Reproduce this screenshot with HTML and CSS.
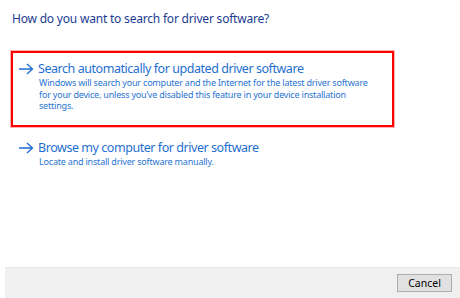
FILE: index.html
```html
<!DOCTYPE html>
<html>
<head>
<meta charset="utf-8">
<link rel="stylesheet" href="styles.css">
</head>
<body>
<div class="page">
  <div class="content">
    <h1 class="instruction">How do you want to search for driver software?</h1>
    <div class="option highlighted">
      <svg class="arrow" width="16" height="12" viewBox="0 0 16 12"><path d="M1 6 H14.5 M9 1 L14.5 6 L9 11" fill="none" stroke="#1f6fd0" stroke-width="1.3"/></svg>
      <div class="option-text">
        <div class="option-title">Search automatically for updated driver software</div>
        <div class="option-desc">Windows will search your computer and the Internet for the latest driver software for your device, unless you’ve disabled this feature in your device installation settings.</div>
      </div>
    </div>
    <div class="option">
      <svg class="arrow" width="16" height="12" viewBox="0 0 16 12"><path d="M1 6 H14.5 M9 1 L14.5 6 L9 11" fill="none" stroke="#1f6fd0" stroke-width="1.3"/></svg>
      <div class="option-text">
        <div class="option-title">Browse my computer for driver software</div>
        <div class="option-desc">Locate and install driver software manually.</div>
      </div>
    </div>
  </div>
  <div class="footer">
    <button class="btn">Cancel</button>
  </div>
</div>
</body>
</html>
```
FILE: styles.css
```css
html, body {
  margin: 0;
  padding: 0;
  background: #fff;
}
.page {
  width: 460px;
  height: 298px;
  display: flex;
  flex-direction: column;
  font-family: "Noto Sans", "Open Sans", sans-serif;
}
.content {
  flex: 1;
  padding: 10px 0 0 11px;
}
.instruction {
  margin: 0 0 0 1px;
  font-size: 12px;
  letter-spacing: -0.2px;
  font-weight: normal;
  color: #1b3c93;
  line-height: 18px;
}
.option {
  display: flex;
  align-items: flex-start;
  width: 383px;
  box-sizing: border-box;
  padding: 7px 0 0 5px;
  border: 2px solid transparent;
}
.option.highlighted {
  margin-top: 23px;
  height: 76px;
  border-color: #ff0000;
  box-shadow: 0 0 0 1px #ffb3b3;
}
.option + .option {
  margin-top: 3px;
}
.arrow {
  flex: none;
  margin-top: 3px;
  margin-right: 4px;
}
.option-title {
  font-size: 12.5px;
  letter-spacing: -0.45px;
  color: #1f6fd0;
  line-height: 17px;
}
.option-desc {
  font-size: 9px;
  letter-spacing: -0.2px;
  color: #2a75d2;
  line-height: 11.5px;
  padding-left: 1px;
  max-width: 336px;
}
.footer {
  height: 31px;
  margin-left: 5px;
  background: #f0f0f0;
  border-top: 1px solid #e9e9e9;
  box-sizing: border-box;
  display: flex;
  justify-content: flex-end;
  align-items: flex-start;
  padding: 6px 8px 0 0;
}
.btn {
  width: 55px;
  height: 18px;
  padding: 0;
  background: #e1e1e1;
  border: 1px solid #adadad;
  font-family: "Noto Sans", "Open Sans", sans-serif;
  font-size: 10.5px;
  color: #000;
  line-height: 14px;
}
```
